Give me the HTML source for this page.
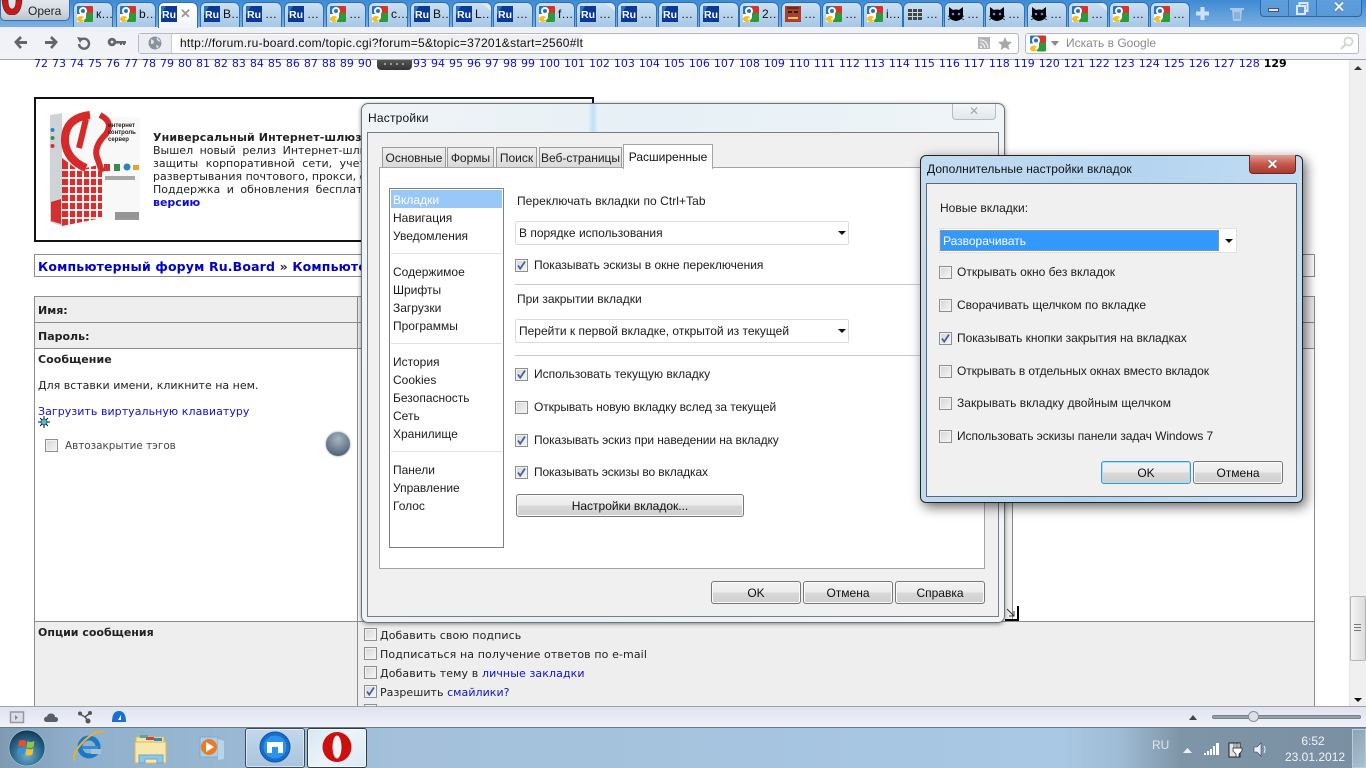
<!DOCTYPE html>
<html><head><meta charset="utf-8"><title>Opera</title>
<style>
html,body{margin:0;padding:0;width:1366px;height:768px;overflow:hidden;background:#fff}
body{position:relative;font-family:"Liberation Sans","Noto Sans CJK SC",sans-serif;font-size:12px;color:#1a1a1a}
div,span,svg{position:absolute;box-sizing:border-box}
.t{top:2px;height:25px;border:1px solid #2a72b8;border-bottom:0;border-radius:6px 6px 0 0;background:linear-gradient(#cbe0f3,#a6c7e6);width:40px;color:#111;font-size:12px;line-height:22px;white-space:nowrap;overflow:hidden}
.t svg{left:3px;top:3px;width:16px;height:16px}
.t span{left:22px;top:0}
.t .n{right:0;top:0;width:10px;height:8px;background:linear-gradient(to top right,transparent 50%,#e4e8ec 50%)}
.v{font-family:"DejaVu Sans",sans-serif;font-size:11px;white-space:nowrap;line-height:14px;color:#222}
.lnk{color:#1010cc}
.l{white-space:nowrap;line-height:16px;color:#1c1c1c;font-size:12px}
.c{width:13px;height:13px;border:1px solid #8e8f8f;background:linear-gradient(135deg,#d4d4d4,#f7f7f7);box-shadow:inset 0 0 0 1px #f2f2f2}
.c svg{left:0;top:0;width:11px;height:11px}
.btn{height:23px;border:1px solid #777;border-radius:3px;background:linear-gradient(#f3f3f3 0,#ececec 48%,#d8d8d8 52%,#cfcfcf 100%);text-align:center;line-height:22px;font-size:12px;color:#111;box-shadow:inset 0 0 0 1px #fafafa}
.tab{top:147px;height:21px;border:1px solid #9a9a9a;border-bottom:0;background:linear-gradient(#f0f0f0,#d8d8d8);text-align:center;line-height:21px;font-size:12px;color:#222;white-space:nowrap}
.sel{height:24px;border:1px solid #dcdcdc;border-radius:2px;background:#fff;line-height:22px;padding-left:3px;font-size:12px;white-space:nowrap}
.arr{width:0;height:0;border-left:4px solid transparent;border-right:4px solid transparent;border-top:4px solid #111}
.sep{height:1px;background:#c8c8c8}
</style></head><body>
<svg width="0" height="0" style="left:0;top:0">
<defs>
<symbol id="g" viewBox="0 0 16 16"><rect width="16" height="16" rx="1" fill="#fff"/><path d="M0 1q0-1 1-1h7v8H0z" fill="#2a6fc9"/><path d="M8 0h7q1 0 1 1v7H8z" fill="#d8332a"/><path d="M8 7h8v8q0 1-1 1H7z" fill="#2c9a3a"/><ellipse cx="4" cy="13" rx="4" ry="3" fill="#f5bd1f"/><circle cx="6" cy="5" r="3" fill="none" stroke="#fff" stroke-width="2"/><path d="M8 8v3q0 2-3 2" fill="none" stroke="#fff" stroke-width="2"/></symbol>
<symbol id="ru" viewBox="0 0 16 16"><rect width="16" height="16" fill="#0b3a94"/><path d="M0 0h5L0 9z" fill="#2a6fc9"/><text x="1" y="12" font-family="Liberation Sans" font-weight="bold" font-size="10.5" fill="#fff">Ru</text></symbol>
<symbol id="cat" viewBox="0 0 16 16"><path d="M1 1l4 3q3-1 6 0l4-3v8q0 5-7 6-7-1-7-6z" fill="#000"/><circle cx="5" cy="8" r="1.3" fill="#77f"/><circle cx="11" cy="8" r="1.3" fill="#77f"/><path d="M0 10l3 1M0 14l3-2M16 10l-3 1M16 14l-3-2" stroke="#000" stroke-width=".7"/></symbol>
<symbol id="ck" viewBox="0 0 11 11"><path d="M2 5.500l2.200 3.200L9 1.500" fill="none" stroke="#47609e" stroke-width="1.800"/></symbol>
</defs></svg>

<!-- tab bar -->
<div style="left:0;top:0;width:1366px;height:28px;background:linear-gradient(#3f8ad3,#7db1e4)"></div>
<div style="left:0;top:0;width:70px;height:21px;border:1px solid #3a6ea8;border-top:0;border-radius:0 0 5px 5px;background:linear-gradient(#e4e8ee 0,#d6dce4 50%,#bac4d0 100%)"></div>
<svg style="left:1px;top:0" width="22" height="15" viewBox="0 0 22 15"><path d="M1 0q1 15 10 15t10-15h-6q0 9-4 9t-4-9z" fill="#c81a1a" stroke="#5a2020" stroke-width=".6"/></svg>
<div style="left:28px;top:3px;font-size:12px;line-height:16px;color:#222">Opera</div>

<div class="t" style="left:73px"><svg><use href="#g"/></svg><span>к…</span></div>
<div class="t" style="left:116px"><svg><use href="#g"/></svg><span>b…</span></div>
<div class="t" style="left:158px;background:linear-gradient(#fff,#f2f4f8);border-color:#2a72b8;z-index:2;height:26px"><svg style="left:2px"><use href="#ru"/></svg><span style="left:21px;color:#999;font-weight:bold;font-size:13px">✕</span></div>
<div class="t" style="left:200px"><svg><use href="#ru"/></svg><span>В…</span></div>
<div class="t" style="left:242px"><svg><use href="#ru"/></svg><span>…</span></div>
<div class="t" style="left:284px"><svg><use href="#ru"/></svg><span>…</span></div>
<div class="t" style="left:326px"><svg><use href="#g"/></svg><span>…</span></div>
<div class="t" style="left:368px"><svg><use href="#g"/></svg><span>с…</span></div>
<div class="t" style="left:410px"><svg><use href="#ru"/></svg><span>В…</span></div>
<div class="t" style="left:452px"><svg><use href="#ru"/></svg><span>L…</span><div class="n"></div></div>
<div class="t" style="left:493px"><svg><use href="#ru"/></svg><span>…</span></div>
<div class="t" style="left:535px"><svg><use href="#g"/></svg><span>f…</span></div>
<div class="t" style="left:576px"><svg><use href="#ru"/></svg><span>…</span><div class="n"></div></div>
<div class="t" style="left:617px"><svg><use href="#ru"/></svg><span>…</span></div>
<div class="t" style="left:658px"><svg><use href="#ru"/></svg><span>…</span></div>
<div class="t" style="left:699px"><svg><use href="#ru"/></svg><span>…</span></div>
<div class="t" style="left:739px"><svg><use href="#g"/></svg><span>2…</span></div>
<div class="t" style="left:781px"><svg viewBox="0 0 16 16"><rect width="16" height="16" fill="#a8402c"/><rect x="3" y="5" width="4" height="2" fill="#222"/><rect x="9" y="5" width="4" height="2" fill="#222"/><rect x="3" y="11" width="10" height="2" fill="#e8c070"/><rect x="2" y="1" width="12" height="2" fill="#6b2a1c"/></svg><span>…</span></div>
<div class="t" style="left:822px"><svg><use href="#g"/></svg><span>…</span></div>
<div class="t" style="left:863px"><svg><use href="#g"/></svg><span>і…</span></div>
<div class="t" style="left:903px"><svg viewBox="0 0 16 16" fill="#444"><rect x="1" y="3" width="4" height="3"/><rect x="6" y="3" width="4" height="3"/><rect x="11" y="3" width="4" height="3"/><rect x="1" y="7" width="4" height="3"/><rect x="6" y="7" width="4" height="3"/><rect x="11" y="7" width="4" height="3"/><rect x="1" y="11" width="4" height="3"/><rect x="6" y="11" width="4" height="3"/><rect x="11" y="11" width="4" height="3"/></svg><span>…</span></div>
<div class="t" style="left:944px"><svg><use href="#cat"/></svg><span>…</span></div>
<div class="t" style="left:985px"><svg><use href="#cat"/></svg><span>…</span></div>
<div class="t" style="left:1027px"><svg><use href="#cat"/></svg><span>…</span></div>
<div class="t" style="left:1068px"><svg><use href="#g"/></svg><span>…</span><div class="n"></div></div>
<div class="t" style="left:1109px"><svg><use href="#g"/></svg><span>…</span></div>
<div class="t" style="left:1150px"><svg><use href="#g"/></svg><span>…</span></div>
<svg style="left:1196px;top:7px" width="13" height="13"><path d="M4.500 0h4v4.500H13v4H8.500V13h-4V8.500H0v-4h4.500z" fill="#cfe2f5"/></svg>
<svg style="left:1229px;top:5px" width="16" height="16"><path d="M1 3h14v2H1zM3 5h10l-1 11H4z" fill="#a9c9e6"/><path d="M6 7v7M8 7v7M10 7v7" stroke="#6e9cc8"/></svg>
<div style="left:1260px;top:-1px;width:102px;height:18px;border:1px solid #2a68a8;border-radius:0 0 4px 4px;background:linear-gradient(#5e9edc,#5a98d6)"></div>
<div style="left:1288px;top:0;width:1px;height:17px;background:#3a74b0"></div>
<div style="left:1316px;top:0;width:1px;height:17px;background:#3a74b0"></div>
<div style="left:1268px;top:8px;width:11px;height:4px;background:#dfe8f2;border:1px solid #456"></div>
<svg style="left:1296px;top:2px" width="13" height="13"><rect x="3.500" y="1" width="8" height="8" fill="none" stroke="#dfe8f2" stroke-width="2"/><rect x="1" y="4" width="8" height="8" fill="#5a98d6" stroke="#dfe8f2" stroke-width="2"/></svg>
<div style="left:1327px;top:-2px;color:#eef2f6;font-weight:bold;font-size:15px;line-height:20px;width:24px;text-align:center;text-shadow:0 0 1px #234">✕</div>

<!-- toolbar -->
<div style="left:0;top:27px;width:1366px;height:33px;background:linear-gradient(#eff1f8,#f2f3f6);border-bottom:1px solid #a0a4aa"></div>
<svg style="left:12px;top:34px" width="120" height="18" fill="#666">
<path d="M2 8l6-6 2 2-3 3h8v3H7l3 3-2 2z"/>
<path d="M46 8l-6-6-2 2 3 3h-8v3h8l-3 3 2 2z"/>
<path d="M67 9a5 5 0 1 0 1.600-4" fill="none" stroke="#666" stroke-width="2.400" transform="translate(0 1)"/><path d="M65 3l6 1-3 5z"/>
<circle cx="100" cy="8" r="4.300"/><rect x="103" y="7" width="11" height="2.600"/><rect x="108" y="9" width="2" height="2"/><rect x="111" y="9" width="2" height="2"/><circle cx="100" cy="8" r="1.400" fill="#eee"/>
</svg>
<div style="left:138px;top:33px;width:881px;height:21px;border:1px solid #b4b8c0;border-radius:3px;background:#fff"></div>
<div style="left:139px;top:34px;width:33px;height:19px;background:#eceef3;border-right:1px solid #c8ccd2"></div>
<svg style="left:148px;top:36px" width="14" height="14"><circle cx="7" cy="7" r="6.500" fill="#8c929c"/><path d="M3 3q3 1 3 3t-3 2M9 1q-1 3 1 4t3 1M8 9l3 1-2 3z" fill="#dfe3e8"/></svg>
<div style="left:180px;top:35px;width:402px;height:16px;background:#f0f0f0"></div>
<div style="left:180px;top:35px;line-height:16px;font-size:12px;white-space:nowrap;color:#111;letter-spacing:.26px">http://forum.ru-board.com/topic.cgi?forum=5&amp;topic=37201&amp;start=2560#lt</div>
<svg style="left:978px;top:37px" width="36" height="13"><rect width="12" height="12" fill="#b4b4b4"/><path d="M2 3q7 0 8 8M2 6q4 0 5 5" fill="none" stroke="#eee" stroke-width="1.300"/><circle cx="3" cy="10" r="1.200" fill="#eee"/><path d="M27 0l2 4.500 5 .5-3.700 3.200 1.100 4.800-4.400-2.600-4.400 2.600 1.100-4.800L20 5l5-.5z" fill="#a8a8a8"/></svg>
<div style="left:1025px;top:33px;width:334px;height:21px;border:1px solid #b4b8c0;border-radius:3px;background:#fff"></div>
<svg style="left:1030px;top:35px;width:16px;height:17px"><use href="#g"/></svg>
<div class="arr" style="left:1051px;top:41px;border-top:0;border-bottom:5px solid #888;transform:rotate(180deg)"></div>
<div style="left:1066px;top:35px;line-height:16px;font-size:12px;color:#8a8a8a;white-space:nowrap">Искать в Google</div>
<svg style="left:1340px;top:36px" width="14" height="14"><circle cx="8.500" cy="5.500" r="4" fill="none" stroke="#d4d4d4" stroke-width="1.800"/><path d="M6 8l-5 5" stroke="#d4d4d4" stroke-width="2.200"/></svg>

<!-- page -->
<div class="v lnk" style="left:34px;top:57px;word-spacing:.5px">72 73 74 75 76 77 78 79 80 81 82 83 84 85 86 87 88 89 90</div>
<div style="left:377px;top:60px;width:35px;height:10px;background:linear-gradient(#555,#333);border-radius:0 0 4px 4px"></div>
<svg style="left:383px;top:62px" width="23" height="4" fill="#999"><rect x="1" y="1" width="2" height="2"/><rect x="7" y="1" width="2" height="2"/><rect x="13" y="1" width="2" height="2"/><rect x="19" y="1" width="2" height="2"/></svg>
<div class="v lnk" style="left:413px;top:57px;word-spacing:.5px">93 94 95 96 97 98 99 100 101 102 103 104 105 106 107 108 109 110 111 112 113 114 115 116 117 118 119 120 121 122 123 124 125 126 127 128 <b style="color:#000">129</b></div>

<div style="left:34px;top:97px;width:560px;height:145px;border:2px solid #111"></div>
<svg style="left:48px;top:110px" width="100" height="120" viewBox="0 0 100 120">
<path d="M14 3L92 8V106L14 116z" fill="#f8f8f8"/><path d="M2 5L14 3V116L2 112z" fill="#cfd2d6"/>
<path d="M14 48L30 60L54 54V108L14 116z" fill="#d43030"/>
<path d="M14 60h40M14 68h40M14 76h40M14 84h40M14 92h40M14 100h40M14 108h40M21 50v66M28 56v60M35 58v58M42 56v56M49 54v56" stroke="#fff" stroke-width="1.800"/>
<path d="M3 92l10-3v25l-10-3z" fill="#d43030"/>
<path d="M42 5Q16 8 17 32Q19 50 38 58" fill="none" stroke="#d42a2a" stroke-width="8"/>
<path d="M38 9L31 38" fill="none" stroke="#d42a2a" stroke-width="6"/>
<path d="M52 5Q66 12 58 24Q44 38 50 50L54 62" fill="none" stroke="#d42a2a" stroke-width="6"/>
<circle cx="4.500" cy="20" r="2" fill="#2a80c0"/><circle cx="4.500" cy="28" r="2" fill="#3a8a4a"/><circle cx="4.500" cy="36" r="2" fill="#c33"/>
<rect x="56" y="54" width="6" height="7" fill="#c33"/><rect x="66" y="54" width="6" height="7" fill="#3a8a4a"/><circle cx="79" cy="57" r="3.500" fill="#2a80c0"/><rect x="85" y="55" width="6" height="5" fill="#e8a030"/>
<rect x="57" y="66" width="30" height="4" fill="#666" opacity=".55"/><rect x="67" y="102" width="24" height="8" fill="#555" opacity=".6"/>
<text x="60" y="17" font-size="6" font-weight="bold" fill="#222" font-family="Liberation Sans">интернет</text>
<text x="60" y="24" font-size="6" font-weight="bold" fill="#222" font-family="Liberation Sans">контроль</text>
<text x="60" y="31" font-size="6" font-weight="bold" fill="#222" font-family="Liberation Sans">сервер</text>
</svg>
<div class="v" style="left:153px;top:131px;font-weight:bold;letter-spacing:.12px">Универсальный Интернет-шлюз</div>
<div class="v" style="left:153px;top:144px;word-spacing:3px">Вышел новый релиз Интернет-шлюза</div>
<div class="v" style="left:153px;top:157px;word-spacing:4px">защиты корпоративной сети, учета</div>
<div class="v" style="left:153px;top:170px">развертывания почтового, прокси, файл</div>
<div class="v" style="left:153px;top:183px;word-spacing:3px">Поддержка и обновления бесплатны</div>
<div class="v lnk" style="left:153px;top:196px;font-weight:bold">версию</div>

<div style="left:34px;top:254px;width:1281px;height:23px;border:1px solid #8c8c8c"></div>
<div class="v" style="left:38px;top:260px;font-size:12.500px;letter-spacing:.15px;font-weight:bold;color:#0000c8">Компьютерный форум Ru.Board <span style="position:static;color:#223">»</span> Компьютерный</div>

<div style="left:34px;top:296px;width:1281px;height:27px;background:#eee;border:1px solid #8c8c8c"></div>
<div style="left:34px;top:322px;width:1281px;height:27px;background:#eee;border:1px solid #8c8c8c"></div>
<div style="left:34px;top:348px;width:1281px;height:274px;background:#fff;border:1px solid #8c8c8c"></div>
<div style="left:34px;top:621px;width:1281px;height:90px;background:#eee;border:1px solid #8c8c8c;border-bottom:0"></div>
<div style="left:357px;top:296px;width:1px;height:415px;background:#8c8c8c"></div>
<div class="v" style="left:38px;top:304px;font-weight:bold">Имя:</div>
<div class="v" style="left:38px;top:330px;font-weight:bold">Пароль:</div>
<div class="v" style="left:38px;top:353px;font-weight:bold;letter-spacing:.05px">Сообщение</div>
<div class="v" style="left:38px;top:379px">Для вставки имени, кликните на нем.</div>
<div class="v lnk" style="left:38px;top:405px;letter-spacing:.05px">Загрузить виртуальную клавиатуру</div>
<svg style="left:38px;top:416px" width="12" height="12"><circle cx="6" cy="6" r="3.500" fill="#39a"/><path d="M6 0v12M0 6h12M2 2l8 8M10 2l-8 8" stroke="#111" stroke-width="1"/><circle cx="6" cy="6" r="2.500" fill="#5bc"/></svg>
<div class="c" style="left:45px;top:439px"></div>
<div class="v" style="left:65px;top:438px;font-size:10.400px;color:#444;line-height:16px">Автозакрытие тэгов</div>
<div style="left:326px;top:432px;width:24px;height:24px;border-radius:12px;background:radial-gradient(circle at 50% 30%,#a8b4c0,#66788a 60%,#3c4c5c);box-shadow:0 0 2px #888"></div>
<div style="left:1004px;top:500px;width:9px;height:120px;background:#f0f0f0;border-right:1px solid #888"></div>
<svg style="left:1004px;top:606px" width="15" height="15"><path d="M13 0h2v15H1v-2h12z" fill="#000"/><path d="M3 3l7 7M5 10h5V5" fill="none" stroke="#333"/></svg>
<div class="v" style="left:38px;top:626px;font-weight:bold">Опции сообщения</div>
<div class="c" style="left:364px;top:628px"></div><div class="v" style="left:380px;top:629px;letter-spacing:.1px">Добавить свою подпись</div>
<div class="c" style="left:364px;top:647px"></div><div class="v" style="left:380px;top:648px;letter-spacing:.1px">Подписаться на получение ответов по e-mail</div>
<div class="c" style="left:364px;top:666px"></div><div class="v" style="left:380px;top:667px;letter-spacing:.1px">Добавить тему в <span style="position:static" class="lnk">личные закладки</span></div>
<div class="c" style="left:364px;top:685px"><svg><use href="#ck"/></svg></div><div class="v" style="left:380px;top:686px;letter-spacing:.05px">Разрешить <span style="position:static" class="lnk">смайлики?</span></div>
<div class="c" style="left:364px;top:704px"></div>

<!-- scrollbar -->
<div style="left:1349px;top:60px;width:17px;height:648px;background:#f0f0f0;border-left:1px solid #e4e4e4"></div>
<div class="arr" style="left:1354px;top:66px;border-top:0;border-bottom:4px solid #333"></div>
<div class="arr" style="left:1354px;top:698px"></div>
<div style="left:1350px;top:596px;width:16px;height:65px;border:1px solid #b4b4b4;border-radius:2px;background:linear-gradient(90deg,#f4f4f4,#dcdcdc)"></div>
<div style="left:1354px;top:624px;width:7px;height:7px;border-top:1px solid #777;border-bottom:1px solid #777"><div style="left:0;top:2px;width:7px;height:1px;background:#777"></div></div>

<!-- dialog 1 -->
<div style="left:361px;top:103px;width:644px;height:520px;border:1px solid #6e7478;border-radius:7px;background:linear-gradient(100deg,#f0f4f7,#e6f0f6 40%,#f2f6f8);box-shadow:0 1px 4px rgba(0,0,0,.45)"></div>
<div style="left:588px;top:104px;width:10px;height:28px;background:linear-gradient(90deg,rgba(190,222,245,0),#bfe0f6,rgba(190,222,245,0))"></div>
<div style="left:952px;top:104px;width:44px;height:16px;border:1px solid #b4bcc4;border-top:0;border-radius:0 0 4px 4px;background:linear-gradient(#f4f6f8,#e2e8ec)"></div>
<div style="left:966px;top:102px;width:16px;text-align:center;font-size:12px;color:#9aa;line-height:18px">✕</div>
<div style="left:368px;top:110px;line-height:16px;font-size:12px;color:#111;letter-spacing:.2px">Настройки</div>
<div style="left:367px;top:132px;width:632px;height:485px;background:#f0f0f0;border:1px solid #787c80"></div>
<div class="tab" style="left:382px;width:64px">Основные</div>
<div class="tab" style="left:447px;width:47px">Формы</div>
<div class="tab" style="left:496px;width:41px">Поиск</div>
<div class="tab" style="left:539px;width:83px">Веб-страницы</div>
<div style="left:379px;top:167px;width:606px;height:402px;background:#fff;border:1px solid #a4a4a4"></div>
<div class="tab" style="left:623px;width:90px;top:144px;height:25px;background:#fff;border-color:#a4a4a4;line-height:24px;color:#111">Расширенные</div>
<div style="left:389px;top:188px;width:115px;height:360px;border:1px solid #808080;background:#fff"></div>
<div style="left:391px;top:190px;width:111px;height:18px;background:#99c8f8"></div>
<div class="l" style="left:393px;top:192px;color:#fff">Вкладки</div>
<div class="l" style="left:393px;top:210px">Навигация</div>
<div class="l" style="left:393px;top:228px">Уведомления</div>
<div class="sep" style="left:391px;top:253px;width:111px;background:#e0e0e0"></div>
<div class="l" style="left:393px;top:264px">Содержимое</div>
<div class="l" style="left:393px;top:282px">Шрифты</div>
<div class="l" style="left:393px;top:300px">Загрузки</div>
<div class="l" style="left:393px;top:318px">Программы</div>
<div class="sep" style="left:391px;top:343px;width:111px;background:#e0e0e0"></div>
<div class="l" style="left:393px;top:354px">История</div>
<div class="l" style="left:393px;top:372px">Cookies</div>
<div class="l" style="left:393px;top:390px">Безопасность</div>
<div class="l" style="left:393px;top:408px">Сеть</div>
<div class="l" style="left:393px;top:426px">Хранилище</div>
<div class="sep" style="left:391px;top:451px;width:111px;background:#e0e0e0"></div>
<div class="l" style="left:393px;top:462px">Панели</div>
<div class="l" style="left:393px;top:480px">Управление</div>
<div class="l" style="left:393px;top:498px">Голос</div>

<div class="l" style="left:517px;top:193px;letter-spacing:.06px">Переключать вкладки по Ctrl+Tab</div>
<div class="sel" style="left:515px;top:221px;width:334px">В порядке использования</div>
<div class="arr" style="left:838px;top:231px"></div>
<div class="c" style="left:515px;top:259px"><svg><use href="#ck"/></svg></div>
<div class="l" style="left:534px;top:257px">Показывать эскизы в окне переключения</div>
<div class="sep" style="left:515px;top:284px;width:460px"></div>
<div class="l" style="left:517px;top:291px">При закрытии вкладки</div>
<div class="sel" style="left:515px;top:319px;width:334px">Перейти к первой вкладке, открытой из текущей</div>
<div class="arr" style="left:838px;top:329px"></div>
<div class="sep" style="left:515px;top:355px;width:460px"></div>
<div class="c" style="left:515px;top:368px"><svg><use href="#ck"/></svg></div>
<div class="l" style="left:534px;top:366px">Использовать текущую вкладку</div>
<div class="c" style="left:515px;top:401px"></div>
<div class="l" style="left:534px;top:399px;letter-spacing:-.1px">Открывать новую вкладку вслед за текущей</div>
<div class="c" style="left:515px;top:434px"><svg><use href="#ck"/></svg></div>
<div class="l" style="left:534px;top:432px;letter-spacing:-.1px">Показывать эскиз при наведении на вкладку</div>
<div class="c" style="left:515px;top:466px"><svg><use href="#ck"/></svg></div>
<div class="l" style="left:534px;top:464px;letter-spacing:-.13px">Показывать эскизы во вкладках</div>
<div class="btn" style="left:516px;top:494px;width:228px">Настройки вкладок...</div>
<div class="btn" style="left:711px;top:581px;width:90px">OK</div>
<div class="btn" style="left:803px;top:581px;width:90px">Отмена</div>
<div class="btn" style="left:895px;top:581px;width:90px">Справка</div>

<!-- dialog 2 -->
<div style="left:920px;top:155px;width:383px;height:348px;border:1px solid #222;border-radius:6px;background:linear-gradient(100deg,#c4dcf0,#b4d4f0 50%,#c8e0f4);box-shadow:3px 4px 12px rgba(0,0,0,.6)"></div>
<div style="left:1249px;top:155px;width:47px;height:19px;border:1px solid #6a2a24;border-top:0;border-radius:0 0 4px 4px;background:linear-gradient(#e0a098,#c8584c 50%,#a83a30)"></div>
<div style="left:1264px;top:154px;width:17px;text-align:center;font-size:14px;font-weight:bold;line-height:20px;color:#fff;text-shadow:0 0 1px #333">✕</div>
<div style="left:927px;top:161px;line-height:16px;font-size:12px;color:#111;letter-spacing:.06px;white-space:nowrap">Дополнительные настройки вкладок</div>
<div style="left:926px;top:183px;width:371px;height:314px;background:#f0f0f0;border:1px solid #5e6870"></div>
<div class="l" style="left:940px;top:200px">Новые вкладки:</div>
<div style="left:939px;top:228px;width:298px;height:25px;background:#fff;border:1px solid #e0e0e0"></div>
<div style="left:940px;top:230px;width:279px;height:21px;background:#3399ff;outline:1px dotted #d09050;outline-offset:-1px"></div>
<div class="l" style="left:943px;top:233px;color:#fff">Разворачивать</div>
<div class="arr" style="left:1225px;top:239px"></div>
<div class="c" style="left:939px;top:266px"></div><div class="l" style="left:957px;top:264px">Открывать окно без вкладок</div>
<div class="c" style="left:939px;top:299px"></div><div class="l" style="left:957px;top:297px">Сворачивать щелчком по вкладке</div>
<div class="c" style="left:939px;top:332px"><svg><use href="#ck"/></svg></div><div class="l" style="left:957px;top:330px;letter-spacing:-.05px">Показывать кнопки закрытия на вкладках</div>
<div class="c" style="left:939px;top:365px"></div><div class="l" style="left:957px;top:363px;letter-spacing:-.12px">Открывать в отдельных окнах вместо вкладок</div>
<div class="c" style="left:939px;top:397px"></div><div class="l" style="left:957px;top:395px;letter-spacing:.06px">Закрывать вкладку двойным щелчком</div>
<div class="c" style="left:939px;top:430px"></div><div class="l" style="left:957px;top:428px;letter-spacing:-.07px">Использовать эскизы панели задач Windows 7</div>
<div class="btn" style="left:1101px;top:461px;width:90px;border-color:#3c9ac8;box-shadow:inset 0 0 0 1px #a8e0f4">OK</div>
<div class="btn" style="left:1193px;top:461px;width:90px">Отмена</div>

<!-- status bar -->
<div style="left:0;top:706px;width:1366px;height:22px;background:linear-gradient(#dfe3f1,#f0f2f9);border-top:1px solid #a0a4aa;border-bottom:1px solid #70767e"></div>
<svg style="left:8px;top:710px" width="120" height="16">
<rect x="2.500" y="2" width="13" height="10.500" fill="#dde" stroke="#999" stroke-width="1.500"/><path d="M7 5l3 2.500-3 2.500z" fill="#888"/>
<path d="M39 12q-3 0-3-2.500t3-3q1-3.500 4.500-3t3.500 3.500q3 0 3 2.500t-3 2.500z" fill="#5a5e66"/>
<circle cx="72" cy="3.500" r="2" fill="#555"/><circle cx="82" cy="3" r="2" fill="#555"/><circle cx="80" cy="11" r="2.500" fill="#555"/><path d="M72 4l5 3 5-4M77 7l3 4" stroke="#555" fill="none" stroke-width="1.500"/>
<path d="M104 12q0-11 7-11t7 11z" fill="#1a70d0"/><path d="M110 10l3-5 0 5z" fill="#fff"/>
</svg>
<svg style="left:1189px;top:714px" width="10" height="6"><path d="M0 6l4-5 4 5z" fill="#444"/></svg>
<div style="left:1212px;top:715px;width:149px;height:4px;background:#9aa0aa;border:1px solid #7a808a;border-radius:2px"></div>
<div style="left:1248px;top:711px;width:11px;height:11px;border-radius:6px;background:#dde0e6;border:1px solid #8a8e96"></div>

<!-- taskbar -->
<div style="left:0;top:728px;width:1366px;height:40px;background:linear-gradient(90deg,#7f9ab2 0,#8fb0cc 80px,#a4c0da 400px,#a8c8e4 1060px,#9fbcd4 1120px,#7e95a8 1180px,#7a8fa2 1366px)"></div>
<svg style="left:8px;top:729px" width="38" height="38"><defs><radialGradient id="orb" cx=".5" cy=".7" r=".7"><stop offset="0" stop-color="#6ab0cc"/><stop offset=".6" stop-color="#2a6488"/><stop offset="1" stop-color="#123454"/></radialGradient></defs><circle cx="19" cy="19" r="18" fill="url(#orb)" stroke="#9cc" stroke-width=".7"/><path d="M11 12q4-2 7 0l-1 6q-3-2-7 0z" fill="#e8502a"/><path d="M19.500 12q3 2 7 0l-1 6q-4 2-7 0z" fill="#8cc83a"/><path d="M10 19.500q4-2 7 0l-1 6q-3-2-7 0z" fill="#3a90d8"/><path d="M18.500 19.500q3 2 7 0l-1 6q-4 2-7 0z" fill="#f5c030"/></svg>
<svg style="left:72px;top:730px" width="34" height="34"><circle cx="17" cy="17" r="9" fill="none" stroke="#1a78c8" stroke-width="5"/><rect x="10" y="16" width="16" height="3" fill="#2a90d8"/><rect x="19" y="19" width="10" height="5" fill="#a8c0d8"/><path d="M3 31Q-1 24 12 11 25-1 32 2" fill="none" stroke="#e8b030" stroke-width="2"/></svg>
<svg style="left:134px;top:734px" width="34" height="30"><path d="M2 3h28v25H2z" fill="#f4e4a8" stroke="#d8b860"/><rect x="6" y="1" width="8" height="3" fill="#5a9"/><rect x="12" y="3" width="8" height="3" fill="#c44"/><rect x="20" y="4" width="8" height="3" fill="#38c"/><rect x="1" y="8" width="31" height="21" fill="#f6e8a8" stroke="#d8b860"/><path d="M5 29v-8h24v8h-6v-4H11v4z" fill="#8ec8e8" stroke="#6aa8cc"/></svg>
<svg style="left:198px;top:736px" width="30" height="26"><path d="M2 1h18v20H2z" fill="#a8d0e8" stroke="#78aecc"/><path d="M20 3l6 2v18l-6 1z" fill="#b8d4e8"/><circle cx="11" cy="11" r="8" fill="#f07820"/><path d="M8 6l8 5-8 5z" fill="#fff"/></svg>
<div style="left:245px;top:728px;width:60px;height:40px;border:1px solid #3c4c5c;border-radius:3px;background:linear-gradient(#c4d8ec,#a8c4dc);box-shadow:inset 0 0 0 1px rgba(255,255,255,.5)"></div>
<svg style="left:259px;top:731px" width="32" height="32"><circle cx="16" cy="16" r="15" fill="#1a6cc8" stroke="#0e58a8"/><circle cx="16" cy="16" r="11.500" fill="#2a94ec"/><path d="M8 11h16v11h-5v-6h-6v6H8z" fill="#fff"/></svg>
<div style="left:307px;top:728px;width:60px;height:40px;border:1px solid #2c3c4c;border-radius:3px;background:linear-gradient(135deg,#d8e6f2,#ecf4fa 50%,#dce8f2);box-shadow:inset 0 0 0 1px rgba(255,255,255,.7)"></div>
<svg style="left:321px;top:731px" width="32" height="32"><ellipse cx="16" cy="16" rx="14.500" ry="15" fill="#cc1010"/><ellipse cx="16" cy="16" rx="4.500" ry="11.500" fill="#f4f4f4"/></svg>

<div style="left:1152px;top:737px;color:#dde6ee;line-height:16px;font-size:12px">RU</div>
<svg style="left:1183px;top:747px" width="10" height="6"><path d="M0 6l4.500-5 4.500 5z" fill="#eef"/></svg>
<svg style="left:1203px;top:742px" width="18" height="14" fill="#fff"><rect x="1" y="11" width="2" height="2"/><rect x="4" y="9" width="2" height="4"/><rect x="7" y="7" width="2" height="6"/><rect x="10" y="4" width="2" height="9"/><rect x="13" y="1" width="3" height="12"/></svg>
<svg style="left:1227px;top:741px" width="18" height="17"><path d="M2 2h11v14H2z" fill="#dfe6ec" stroke="#222"/><path d="M7 2v5h2V2zM11 2v5h2V2zM6 7h9v3l-3 3v3h-3v-3L6 10z" fill="#fff" stroke="#222" stroke-width=".7"/></svg>
<svg style="left:1253px;top:742px" width="16" height="15"><path d="M1 5h3l4-4v13l-4-4H1z" fill="#eef" stroke="#445" stroke-width=".6"/><path d="M11 4q2 3.500 0 7" fill="none" stroke="#eef"/></svg>
<div style="left:1285px;top:733px;width:56px;text-align:center;color:#f0f4f8;font-size:12px;line-height:16px">6:52</div>
<div style="left:1285px;top:749px;width:56px;text-align:center;color:#f0f4f8;font-size:12px;line-height:16px;white-space:nowrap">23.01.2012</div>
<div style="left:1352px;top:729px;width:14px;height:39px;border:1px solid #b8ccdc;background:linear-gradient(135deg,#8ea4b4,#a8c0d4)"></div>
</body></html>
